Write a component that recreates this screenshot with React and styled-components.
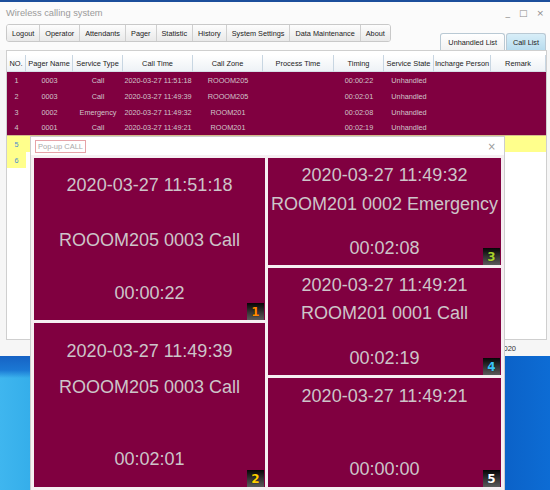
import React from 'react'
import styled, { createGlobalStyle } from 'styled-components'

const GlobalStyle = createGlobalStyle`
  html, body {
    margin: 0;
    padding: 0;
  }
  body {
    font-family: "Liberation Sans", Arial, sans-serif;
    overflow: hidden;
  }
`

const Desktop = styled.div`
  position: relative;
  width: 550px;
  height: 490px;
  overflow: hidden;
  background:
    linear-gradient(to bottom, #1662c4 0px, #1b78d4 14px, transparent 22px) 0 356px / 30px 134px no-repeat,
    linear-gradient(to right, #3fb6ef 0px, #35aeea 30px, #0b62c8 505px, #0d6cd4 550px);
`

const Window = styled.div`
  height: 354px;
  border-top: 2px solid #1c4f9c;
  background: #f6f6f6;
  display: flex;
  flex-direction: column;
`

const TitleBar = styled.div`
  height: 22px;
  display: flex;
  align-items: center;
  justify-content: space-between;
  padding: 0 6px;
  background: #fbfbfb;
`

const Title = styled.div`
  font-size: 9.3px;
  color: #9a9a9a;
`

const WinControls = styled.div`
  display: flex;
  gap: 9px;
  color: #8a8a8a;
  font-size: 9px;
  font-family: "DejaVu Sans", sans-serif;
`

const Toolbar = styled.div`
  height: 26px;
  display: flex;
  justify-content: space-between;
  align-items: flex-start;
  padding: 0 4px 0 6px;
  background: #fbfbfb;
`

const Menu = styled.div`
  display: flex;
  height: 18px;
  border: 1px solid #c9c9c9;
  border-radius: 3px;
  overflow: hidden;
  box-sizing: border-box;
`

const MenuButton = styled.div`
  display: flex;
  align-items: center;
  padding: 0 5px;
  font-size: 7.3px;
  color: #222;
  background: linear-gradient(#fdfdfd, #e9e9e9);
  border-left: ${p => (p.first ? 'none' : '1px solid #cfcfcf')};
`

const Tabs = styled.div`
  display: flex;
  align-self: flex-end;
  gap: 1px;
`

const Tab = styled.div`
  height: 17px;
  display: flex;
  align-items: center;
  padding: 0 ${p => (p.active ? 7 : 6)}px;
  font-size: 7.3px;
  color: #222;
  border: 1px solid #b9c9d4;
  border-bottom: none;
  border-radius: 3px 3px 0 0;
  box-sizing: border-box;
  background: ${p =>
    p.active
      ? 'linear-gradient(#ffffff, #f2f2f2)'
      : 'linear-gradient(#d8eef8, #b8dcee)'};
`

const Panel = styled.div`
  height: 290px;
  margin: 0 3px 0 6px;
  border: 1px solid #cfcfcf;
  background: #fff;
  box-sizing: border-box;
  padding-top: 4px;
`

const Grid = styled.div`
  display: grid;
  grid-template-columns: 19px 47px 50px 70px 70px 71px 50px 50px 57px 1fr;
`

const HeadCell = styled.div`
  height: 17px;
  display: flex;
  align-items: center;
  justify-content: center;
  font-size: 7.4px;
  color: #222;
  white-space: nowrap;
  background: linear-gradient(#ffffff, #eef2f6);
  border-right: 1px solid #c8d6e2;
  border-bottom: 1px solid #d6dee6;
  box-sizing: border-box;
`

const Cell = styled.div`
  height: 16px;
  display: flex;
  align-items: center;
  justify-content: center;
  font-size: 7.3px;
  white-space: nowrap;
  color: ${p => (p.yellow ? '#4c8ed0' : '#d0c4ca')};
  background: ${p => (p.yellow ? '#ffff8c' : p.blank ? '#fff' : '#800040')};
  border-bottom: ${p => (p.last ? '1px solid #d4bd8a' : 'none')};
  box-sizing: border-box;
`

const StatusBar = styled.div`
  height: 16px;
  display: flex;
  align-items: center;
  justify-content: flex-end;
  padding-right: 34px;
  font-size: 7.5px;
  color: #333;
`

const Popup = styled.div`
  position: absolute;
  left: 30px;
  top: 136px;
  width: 475px;
  border: 1px solid #cdcdcd;
  background: #f6eff2;
  box-sizing: border-box;
`

const PopupHeader = styled.div`
  height: 18px;
  display: flex;
  align-items: center;
  justify-content: space-between;
  padding: 0 8px 0 4px;
  background: #fff;
`

const PopupLabel = styled.div`
  font-size: 7.5px;
  color: #aaa;
  padding: 1px 2px;
  border: 1px solid #e6a3a8;
`

const Close = styled.div`
  font-size: 10px;
  color: #9a9a9a;
  font-family: "DejaVu Sans", sans-serif;
`

const PopupBody = styled.div`
  display: grid;
  grid-template-columns: 231px 233px;
  gap: 3px;
  padding: 3px;
`

const Column = styled.div`
  height: 329px;
  display: flex;
  flex-direction: column;
  gap: 3px;
`

const CallCard = styled.div`
  position: relative;
  flex: 1;
  display: flex;
  flex-direction: column;
  align-items: center;
  padding: ${p => p.pad}px 0;
  background: #800040;
  color: #cdc5c9;
  font-size: 18px;
  line-height: 20px;
  white-space: nowrap;
`

const Zone = styled.div`
  margin-top: ${p => p.gap}px;
`

const Timing = styled.div`
  margin-top: auto;
`

const Badge = styled.div`
  position: absolute;
  right: 1px;
  bottom: 0;
  width: 17px;
  height: 17px;
  display: flex;
  align-items: center;
  justify-content: center;
  background: linear-gradient(#050505, #3a3a3a 60%, #5a5a5a);
  font-family: "DejaVu Sans", sans-serif;
  font-weight: bold;
  font-size: 12px;
  line-height: 1;
  color: ${p => p.color};
  text-shadow: 0 0 1px #000;
`

const menu = [
  'Logout',
  'Operator',
  'Attendants',
  'Pager',
  'Statistic',
  'History',
  'System Settings',
  'Data Maintenance',
  'About',
]

const columns = [
  'NO.',
  'Pager Name',
  'Service Type',
  'Call Time',
  'Call Zone',
  'Process Time',
  'Timing',
  'Service State',
  'Incharge Person',
  'Remark',
]

const rows = [
  ['1', '0003', 'Call', '2020-03-27 11:51:18', 'ROOOM205', '', '00:00:22', 'Unhandled', '', ''],
  ['2', '0003', 'Call', '2020-03-27 11:49:39', 'ROOOM205', '', '00:02:01', 'Unhandled', '', ''],
  ['3', '0002', 'Emergency', '2020-03-27 11:49:32', 'ROOM201', '', '00:02:08', 'Unhandled', '', ''],
  ['4', '0001', 'Call', '2020-03-27 11:49:21', 'ROOM201', '', '00:02:19', 'Unhandled', '', ''],
]

const left = [
  { time: '2020-03-27 11:51:18', zone: 'ROOOM205 0003 Call', timing: '00:00:22', n: 1, color: '#ff8a00', pad: 17, gap: 35 },
  { time: '2020-03-27 11:49:39', zone: 'ROOOM205 0003 Call', timing: '00:02:01', n: 2, color: '#ffd000', pad: 18, gap: 16 },
]

const right = [
  { time: '2020-03-27 11:49:32', zone: 'ROOM201 0002 Emergency', timing: '00:02:08', n: 3, color: '#a6d02e', pad: 7, gap: 9 },
  { time: '2020-03-27 11:49:21', zone: 'ROOM201 0001 Call', timing: '00:02:19', n: 4, color: '#3cc4f4', pad: 7, gap: 8 },
  { time: '2020-03-27 11:49:21', zone: '', timing: '00:00:00', n: 5, color: '#ffffff', pad: 8, gap: 8 },
]

const Card = ({ call }) => (
  <CallCard pad={call.pad}>
    <div>{call.time}</div>
    {call.zone && <Zone gap={call.gap}>{call.zone}</Zone>}
    <Timing>{call.timing}</Timing>
    <Badge color={call.color}>{call.n}</Badge>
  </CallCard>
)

const App = () => (
  <Desktop>
    <GlobalStyle />
    <Window>
      <TitleBar>
        <Title>Wireless calling system</Title>
        <WinControls>
          <span>_</span>
          <span>□</span>
          <span>×</span>
        </WinControls>
      </TitleBar>
      <Toolbar>
        <Menu>
          {menu.map((m, i) => (
            <MenuButton key={m} first={i === 0}>
              {m}
            </MenuButton>
          ))}
        </Menu>
        <Tabs>
          <Tab active>Unhandled List</Tab>
          <Tab>Call List</Tab>
        </Tabs>
      </Toolbar>
      <Panel>
        <Grid>
          {columns.map(c => (
            <HeadCell key={c}>{c}</HeadCell>
          ))}
          {rows.map((r, ri) =>
            r.map((v, ci) => (
              <Cell key={`${ri}-${ci}`} last={ri === rows.length - 1}>
                {v}
              </Cell>
            ))
          )}
          {columns.map((c, ci) => (
            <Cell key={`5-${c}`} yellow>
              {ci === 0 ? '5' : ''}
            </Cell>
          ))}
          {columns.map((c, ci) => (
            <Cell key={`6-${c}`} yellow={ci === 0} blank={ci !== 0}>
              {ci === 0 ? '6' : ''}
            </Cell>
          ))}
        </Grid>
      </Panel>
      <StatusBar>2020</StatusBar>
    </Window>

    <Popup>
      <PopupHeader>
        <PopupLabel>Pop-up CALL</PopupLabel>
        <Close>×</Close>
      </PopupHeader>
      <PopupBody>
        <Column>
          {left.map(c => (
            <Card key={c.n} call={c} />
          ))}
        </Column>
        <Column>
          {right.map(c => (
            <Card key={c.n} call={c} />
          ))}
        </Column>
      </PopupBody>
    </Popup>
  </Desktop>
)

export default App
